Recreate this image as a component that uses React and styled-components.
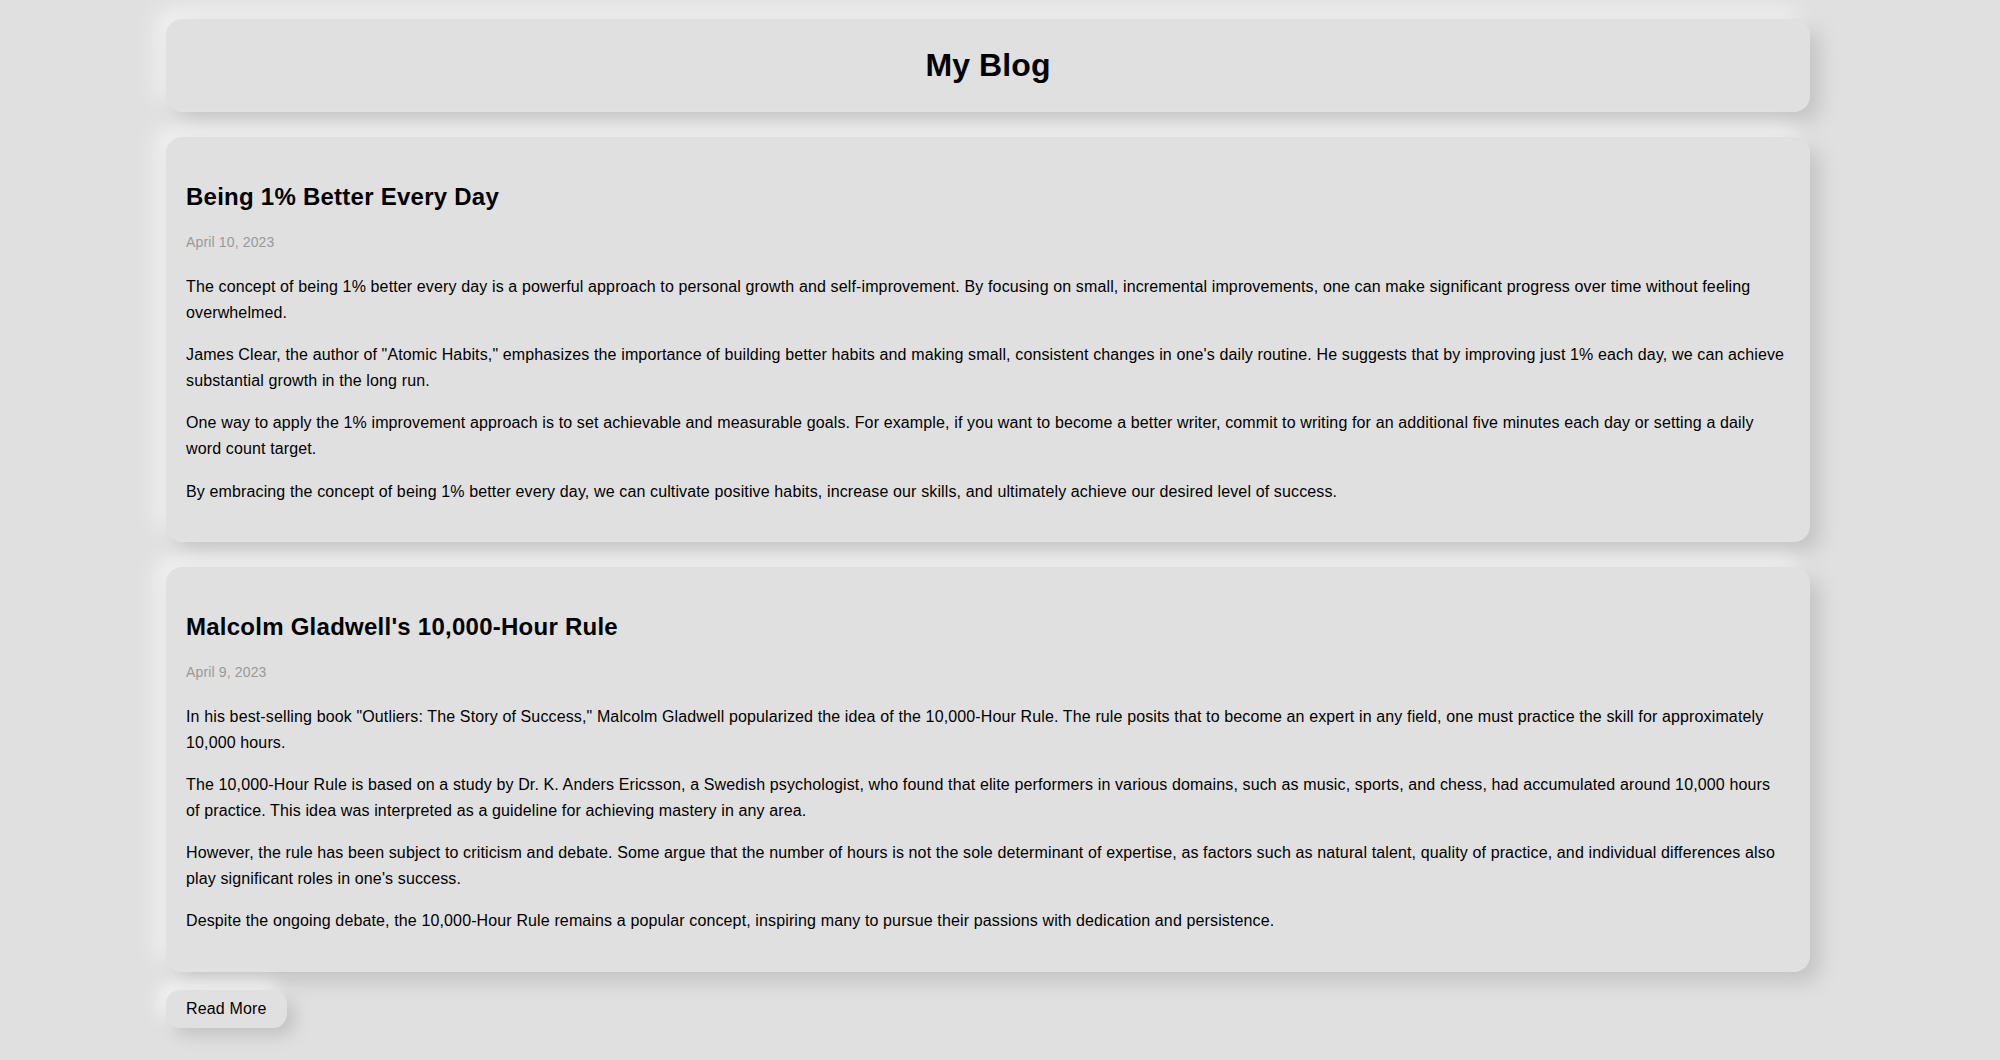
import React from "react";
import styled, { createGlobalStyle } from "styled-components";

const GlobalStyle = createGlobalStyle`
  html, body {
    margin: 0;
    padding: 0;
    background: #e0e0e0;
  }
  body {
    font-family: "Liberation Sans", Arial, Helvetica, sans-serif;
    color: #000;
    line-height: 1.6;
  }
`;

const Page = styled.div`
  width: 1644px;
  margin: 0 0 0 166px;
  padding: 19px 0 40px;
  display: flex;
  flex-direction: column;
  align-items: flex-start;
  gap: 25px;
`;

const Card = styled.section`
  align-self: stretch;
  background: #e0e0e0;
  border-radius: 16px;
  box-shadow: 10px 10px 20px #c4c4c4, -10px -10px 20px #f2f2f2;
  padding: ${(p) => p.$pad || "20px 25px 20px 20px"};
`;

const SiteTitle = styled.h1`
  margin: 0;
  text-align: center;
  font-size: 32px;
  font-weight: bold;
  line-height: 1.6;
  letter-spacing: 0.1px;
`;

const PostTitle = styled.h2`
  font-size: 24px;
  font-weight: bold;
  margin: 21px 0 14px;
  line-height: 1.6;
  letter-spacing: 0.25px;
`;

const PostDate = styled.p`
  font-size: 14px;
  color: #999;
  margin: 0 0 21px;
  letter-spacing: 0.15px;
`;

const Para = styled.p`
  font-size: 16px;
  margin: 0 0 17px;
  letter-spacing: 0.13px;
  &:last-child {
    margin-bottom: 18px;
  }
`;

const ReadMore = styled.button`
  font-family: inherit;
  font-size: 16px;
  letter-spacing: 0.16px;
  color: #000;
  background: #e0e0e0;
  border: none;
  border-radius: 14px;
  padding: 10px 20px;
  line-height: normal;
  box-shadow: 8px 8px 16px #c4c4c4, -8px -8px 16px #f2f2f2;
  cursor: pointer;
  margin-top: -7px;
`;

const posts = [
  {
    title: "Being 1% Better Every Day",
    date: "April 10, 2023",
    paras: [
      "The concept of being 1% better every day is a powerful approach to personal growth and self-improvement. By focusing on small, incremental improvements, one can make significant progress over time without feeling overwhelmed.",
      "James Clear, the author of \"Atomic Habits,\" emphasizes the importance of building better habits and making small, consistent changes in one's daily routine. He suggests that by improving just 1% each day, we can achieve substantial growth in the long run.",
      "One way to apply the 1% improvement approach is to set achievable and measurable goals. For example, if you want to become a better writer, commit to writing for an additional five minutes each day or setting a daily word count target.",
      "By embracing the concept of being 1% better every day, we can cultivate positive habits, increase our skills, and ultimately achieve our desired level of success.",
    ],
  },
  {
    title: "Malcolm Gladwell's 10,000-Hour Rule",
    date: "April 9, 2023",
    paras: [
      "In his best-selling book \"Outliers: The Story of Success,\" Malcolm Gladwell popularized the idea of the 10,000-Hour Rule. The rule posits that to become an expert in any field, one must practice the skill for approximately 10,000 hours.",
      "The 10,000-Hour Rule is based on a study by Dr. K. Anders Ericsson, a Swedish psychologist, who found that elite performers in various domains, such as music, sports, and chess, had accumulated around 10,000 hours of practice. This idea was interpreted as a guideline for achieving mastery in any area.",
      "However, the rule has been subject to criticism and debate. Some argue that the number of hours is not the sole determinant of expertise, as factors such as natural talent, quality of practice, and individual differences also play significant roles in one's success.",
      "Despite the ongoing debate, the 10,000-Hour Rule remains a popular concept, inspiring many to pursue their passions with dedication and persistence.",
    ],
  },
];

export default function App() {
  return (
    <>
      <GlobalStyle />
      <Page>
        <Card $pad="21px 20px">
          <SiteTitle>My Blog</SiteTitle>
        </Card>
        {posts.map((post) => (
          <Card key={post.title}>
            <PostTitle>{post.title}</PostTitle>
            <PostDate>{post.date}</PostDate>
            {post.paras.map((t, i) => (
              <Para key={i}>{t}</Para>
            ))}
          </Card>
        ))}
        <ReadMore>Read More</ReadMore>
      </Page>
    </>
  );
}
